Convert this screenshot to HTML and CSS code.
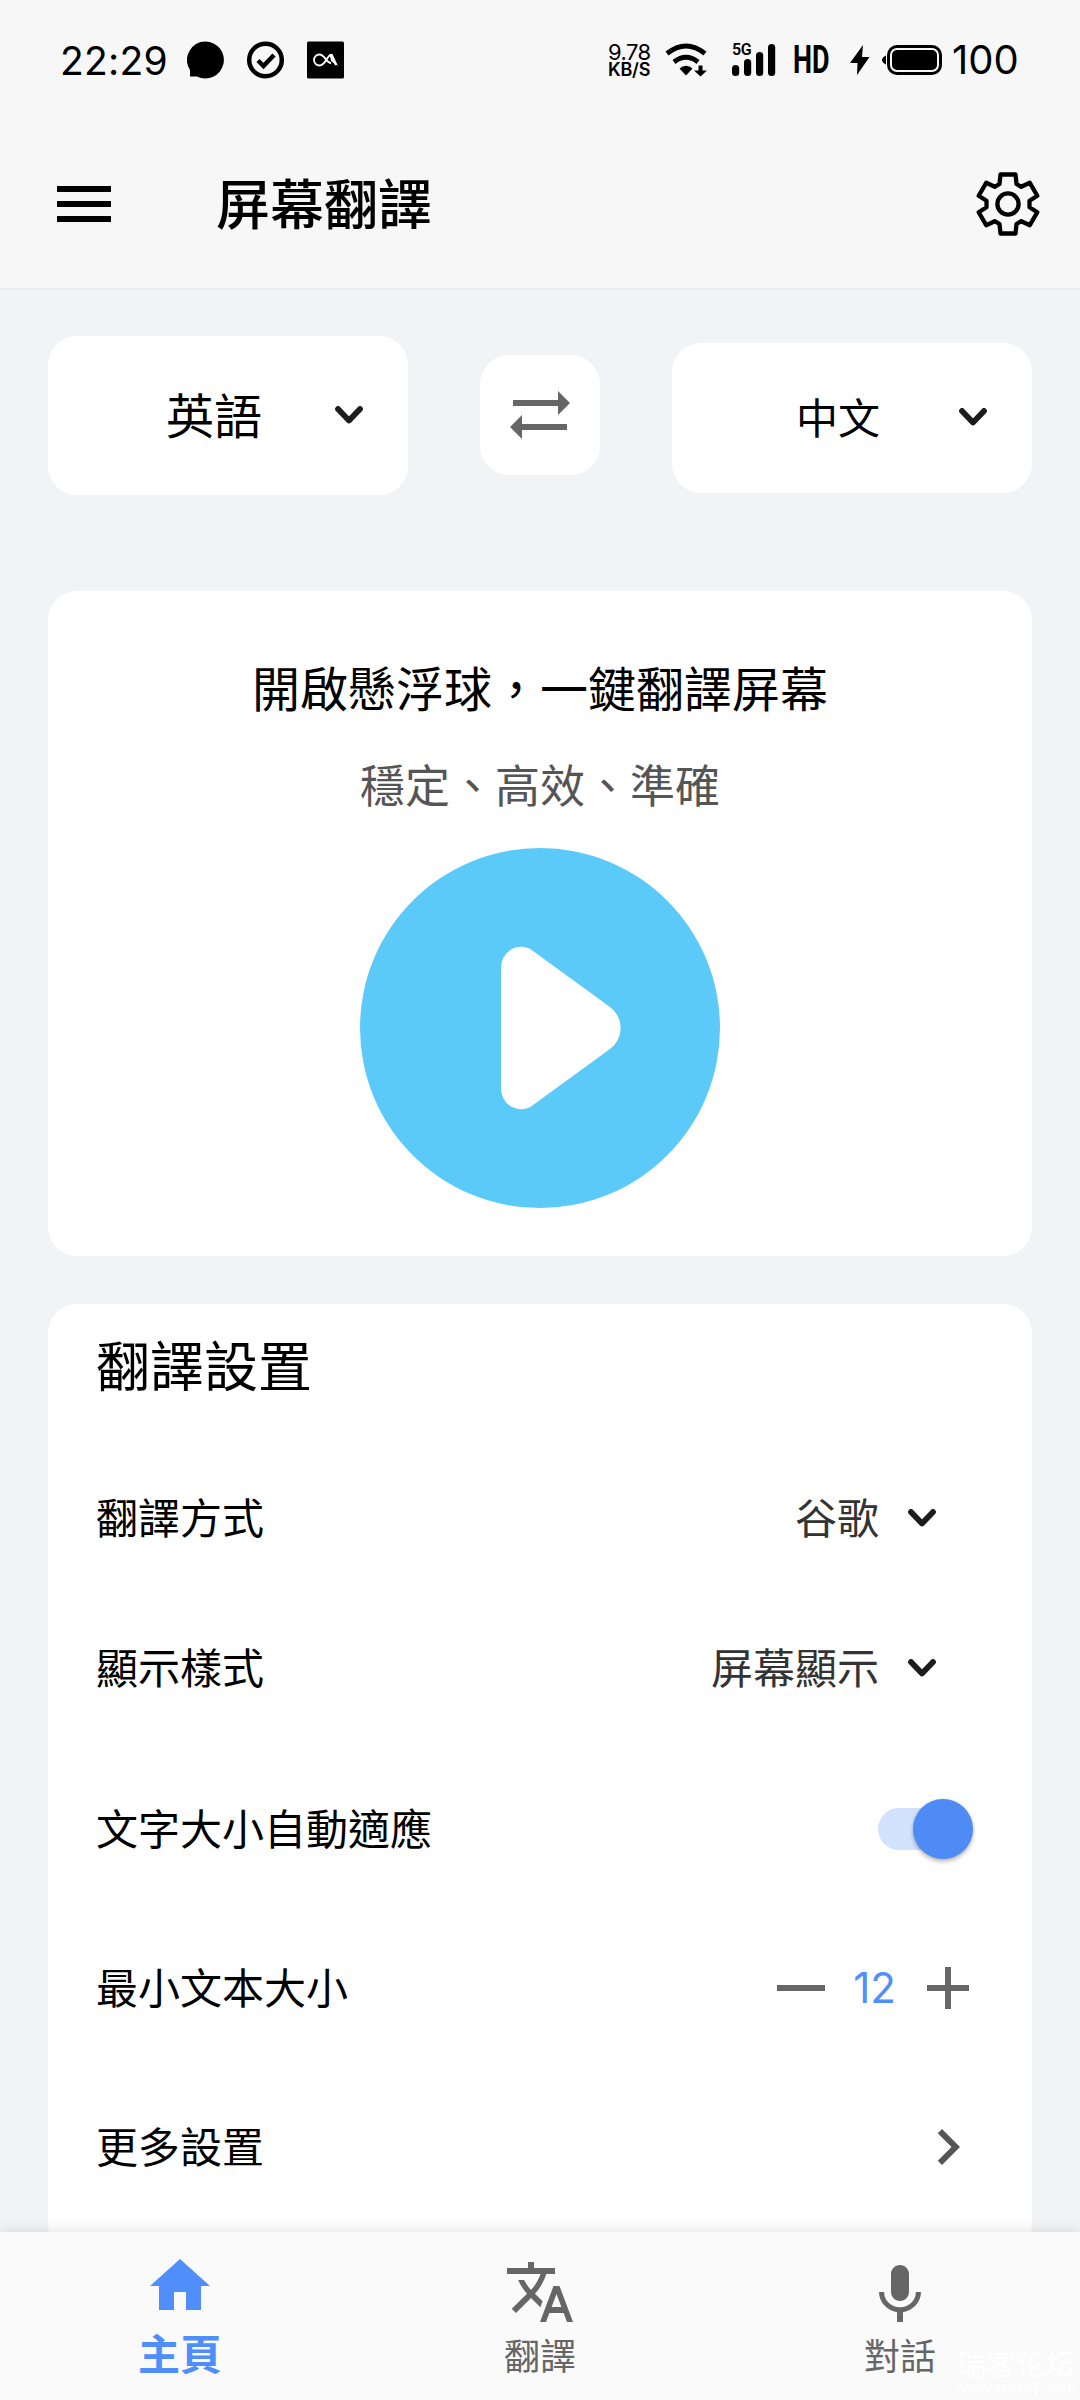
FILE: index.html
```html
<!DOCTYPE html>
<html lang="zh-TW">
<head>
<meta charset="utf-8">
<title>屏幕翻譯</title>
<link rel="stylesheet" href="styles.css">
</head>
<body>
<div class="app">
  <header class="top">
    <div class="status">
      <span class="clock">22:29</span>
      <svg class="notices" width="157" height="38" viewBox="0 0 157 38">
        <path d="M18.500 .5a18.500 18.500 0 1 1-8.500 35H3v-6.500A18.500 18.500 0 0 1 18.500 .5z"/>
        <circle cx="78.500" cy="19" r="16.300" fill="none" stroke="#000" stroke-width="4.500"/>
        <path d="M71 19.500l5.500 5.500L87 14" fill="none" stroke="#000" stroke-width="4.500"/>
        <rect x="120" y=".5" width="37" height="37" rx="1.500"/>
        <path d="M149 24L143 14C140 16 138 24.500 132.500 24.500a5.500 5.500 0 0 1 0-11C138 13.500 139 22 144 22" fill="none" stroke="#fff" stroke-width="1.800"/>
        <path d="M143 13l2.500 0 5.500 12-7-5z" fill="#fff"/>
      </svg>
      <div class="speed"><span class="rate">9.78</span><span class="unit">KB/S</span></div>
      <svg class="wifi" width="43" height="34" viewBox="0 0 43 34">
        <path d="M2 10.500Q21 -4.500 40 10.500M9 19Q21 9.500 33 19" fill="none" stroke="#000" stroke-width="4.800"/>
        <path d="M14.500 25.500Q21 20 27.500 25.500L21 32.500zM33.500 22.500h4v5h4.500l-6.500 6-6.500-6h4.500z"/>
      </svg>
      <div class="cell">
        <span class="gen">5G</span>
        <svg width="44" height="32" viewBox="0 0 44 32">
          <rect x="0" y="21" width="7.200" height="11" rx="3.500"/><rect x="12" y="15" width="7.200" height="17" rx="3.500"/>
          <rect x="24" y="8" width="7.200" height="24" rx="3.500"/><rect x="36" y="0" width="7.200" height="32" rx="3.500"/>
        </svg>
      </div>
      <span class="hd">HD</span>
      <svg class="bolt" width="20" height="30" viewBox="0 0 20 30"><path d="M13 0L0 18h7.500L7 30 19.500 12H12z"/></svg>
      <svg class="battery" width="61" height="30" viewBox="0 0 61 30">
        <path d="M4 10.500v9Q0 17.500 0 15t4-4.500z"/>
        <rect x="6.500" y="1.500" width="52" height="27" rx="8.500" fill="none" stroke="#000" stroke-width="3"/>
        <rect x="10" y="5" width="45" height="20" rx="5"/>
      </svg>
      <span class="level">100</span>
    </div>
    <div class="bar">
      <div class="menu"><i></i><i></i><i></i></div>
      <h1>屏幕翻譯</h1>
      <svg class="gear" width="66" height="66" viewBox="-33 -33 66 66">
        <path d="M-7.500-29.500L7.500-29.500 8.500-20 13.300-17.200 21.800-21.200 29.300-8.250 21.500-3.200 21.500 3.200 29.300 8.250 21.800 21.200 13.300 17.200 8.500 20 7.500 29.500-7.500 29.500-8.500 20-13.300 17.200-21.800 21.200-29.300 8.250-21.500 3.200-21.500-3.200-29.300-8.250-21.800-21.200-13.300-17.200-8.500-20z"/>
        <circle r="10.600"/>
      </svg>
    </div>
  </header>

  <main>
    <section class="langs">
      <div class="lang from"><span>英語</span><svg class="chev" width="28" height="18" viewBox="0 0 28 18"><path d="M3 3l11 11.500L25 3"/></svg></div>
      <div class="swap">
        <svg width="60" height="48" viewBox="0 0 60 48"><path d="M3 9h45V0l12 12-12 12v-9H3zM57 33H12v-9L0 36l12 12v-9h45z"/></svg>
      </div>
      <div class="lang to"><span>中文</span><svg class="chev" width="28" height="18" viewBox="0 0 28 18"><path d="M3 3l11 11.500L25 3"/></svg></div>
    </section>

    <section class="card hero">
      <h2>開啟懸浮球，一鍵翻譯屏幕</h2>
      <p>穩定、高效、準確</p>
      <svg width="360" height="360" viewBox="0 0 360 360">
        <circle cx="180" cy="180" r="180" fill="#5bcaf8"/>
        <path d="M141 121A20 21 0 0 1 173 103L250 159A26 26 0 0 1 250 201L173 257A20 21 0 0 1 141 239z" fill="#fff"/>
      </svg>
    </section>

    <section class="card settings">
      <h3>翻譯設置</h3>
      <div class="row pick"><span>翻譯方式</span><span class="value">谷歌</span><svg class="chev" width="28" height="18" viewBox="0 0 28 18"><path d="M3 3l11 11.500L25 3"/></svg></div>
      <div class="row pick"><span>顯示樣式</span><span class="value">屏幕顯示</span><svg class="chev" width="28" height="18" viewBox="0 0 28 18"><path d="M3 3l11 11.500L25 3"/></svg></div>
      <div class="row auto"><span>文字大小自動適應</span><div class="toggle"><div class="thumb"></div></div></div>
      <div class="row"><span>最小文本大小</span>
        <div class="stepper"><svg width="48" height="42" viewBox="0 0 48 42"><path d="M0 18h48v6H0z"/></svg><b>12</b><svg width="42" height="42" viewBox="0 0 42 42"><path d="M18 0h6v18h18v6H24v18h-6V24H0v-6h18z"/></svg></div>
      </div>
      <div class="row"><span>更多設置</span><svg class="more" width="72" height="72" viewBox="0 0 24 24"><path d="M10 6L8.590 7.410 13.170 12l-4.580 4.590L10 18l6-6z"/></svg></div>
    </section>
  </main>

  <nav>
    <div class="tab active"><svg width="72" height="72" viewBox="0 0 24 24"><path d="M10 20v-6h4v6h5v-8h3L12 3 2 12h3v8z"/></svg><span>主頁</span></div>
    <div class="tab"><svg width="72" height="72" viewBox="0 0 24 24"><path d="M12.870 15.070l-2.540-2.510.03-.03c1.740-1.940 2.980-4.170 3.710-6.530H17V4h-7V2H8v2H1v1.990h11.170C11.500 7.920 10.440 9.750 9 11.350 8.070 10.320 7.300 9.190 6.690 8h-2c.73 1.630 1.730 3.170 2.980 4.560l-5.090 5.020L4 19l5-5 3.110 3.110.76-2.040zM18.500 10h-2L12 22h2l1.120-3h4.750L21 22h2l-4.500-12zm-2.620 7l1.620-4.330L19.120 17h-3.240z"/></svg><span>翻譯</span></div>
    <div class="tab talk"><svg width="72" height="72" viewBox="0 0 24 24"><path d="M12 14c1.660 0 2.990-1.340 2.990-3L15 5c0-1.660-1.340-3-3-3S9 3.340 9 5v6c0 1.660 1.340 3 3 3zm5.300-3c0 3-2.540 5.100-5.300 5.100S6.700 14 6.700 11H5c0 3.410 2.720 6.230 6 6.720V21h2v-3.280c3.280-.48 6-3.300 6-6.720h-1.700z"/></svg><span>對話</span></div>
    <div class="watermark"><span>瑞客论坛</span><em>www.ruike1.com</em></div>
  </nav>
</div>
</body>
</html>
```
FILE: styles.css
```css
* { box-sizing: border-box; margin: 0; padding: 0; }
body { font-family: "Noto Sans CJK TC", sans-serif; color: #000; background: #f1f3f5; }
svg { display: block; flex: none; }
.app { width: 1080px; height: 2400px; display: flex; flex-direction: column; overflow: hidden; }

.top { height: 288px; flex: none; background: #f7f7f7; box-shadow: 0 1px 2px rgba(0,0,0,.06); }
.status { height: 120px; display: flex; align-items: center; padding-left: 60px; font-family: Inter, sans-serif; }
.clock { width: 127px; font-size: 39px; line-height: 48px; padding-top: 2px; letter-spacing: .2px; white-space: nowrap; }
.notices { margin-right: 264px; }
.speed { width: 57px; display: flex; flex-direction: column; gap: 1px; white-space: nowrap; }
.rate { font-size: 22px; line-height: 17px; letter-spacing: -.6px; }
.unit { font-size: 18px; line-height: 15px; font-weight: 600; letter-spacing: -.2px; }
.wifi { margin-right: 24px; }
.cell { display: grid; width: 61px; }
.cell > * { grid-area: 1 / 1; }
.gen { font: 600 16px/12px Roboto, sans-serif; letter-spacing: -.5px; }
.hd { width: 57px; font: 700 39px/40px Roboto, sans-serif; transform: scaleX(.69); transform-origin: 0 50%; white-space: nowrap; }
.bolt { margin-right: 12px; }
.battery { margin-right: 9px; }
.level { font-size: 40px; line-height: 48px; }

.bar { height: 168px; display: flex; align-items: center; padding: 0 39px 0 57px; }
.menu { width: 159px; display: grid; gap: 9px; }
.menu i { width: 54px; height: 6px; background: #000; }
h1 { flex: 1; font-size: 54px; line-height: 80px; font-weight: 500; margin-top: -4px; }
.gear { fill: none; stroke: #000; stroke-width: 4.300; stroke-linejoin: round; }

main { flex: 1; min-height: 0; padding: 48px 48px 0; overflow: hidden; }
.langs { height: 159px; display: flex; justify-content: space-between; align-items: center; }
.lang { width: 360px; display: flex; align-items: center; background: #fff; border-radius: 29px; }
.lang span { flex: 1; margin-top: -6px; }
.from { height: 159px; padding: 0 45px 0 118px; font-size: 48px; }
.to { height: 150px; margin-top: 5px; padding: 0 45px 0 124px; font-size: 42px; }
.chev { fill: none; stroke: #1c1c1c; stroke-width: 5.800; stroke-linecap: round; stroke-linejoin: round; }
.from .chev, .to .chev { margin-top: -2px; }
.swap { width: 120px; height: 120px; margin-top: -1px; border-radius: 29px; background: #fff; display: grid; place-items: center; fill: #666; }

.card { background: #fff; border-radius: 29px; }
.hero { height: 665px; margin-top: 96px; padding-top: 59px; display: flex; flex-direction: column; align-items: center; }
h2 { font-size: 48px; line-height: 72px; font-weight: 400; }
.hero p { font-size: 45px; line-height: 66px; margin: 29px 0 31px; color: #555; }
.settings { margin-top: 48px; height: 949px; padding: 20px 48px 0; }
h3 { font-size: 54px; line-height: 80px; font-weight: 400; height: 119px; }
.row { height: 159px; display: flex; align-items: center; font-size: 42px; line-height: 62px; }
.row > span:first-child { flex: 1; margin-top: -4px; }
.pick { height: 150px; padding-right: 48px; }
.pick .value { margin: -4px 29px 0 0; color: #333; }
.auto { margin-top: 6px; }
.toggle { width: 84px; height: 42px; margin-right: 22px; border-radius: 21px; background: #d2e2fd; display: flex; justify-content: flex-end; align-items: center; }
.thumb { flex: none; width: 60px; height: 60px; margin-right: -11px; border-radius: 50%; background: #4f8bf5; box-shadow: 0 3px 4px rgba(0,0,0,.24), 0 0 3px rgba(0,0,0,.12); }
.stepper { display: flex; align-items: center; fill: #666; padding-right: 15px; }
.stepper b { width: 102px; padding-right: 3px; text-align: center; font: 400 42px/50px Inter, sans-serif; color: #4f8ffb; }
.more { fill: #555; }

nav { position: relative; height: 168px; flex: none; display: flex; background: #fafafa; box-shadow: 0 0 14px rgba(0,0,0,.13); }
.tab { flex: 1; display: flex; flex-direction: column; align-items: center; padding-top: 24px; fill: #666; color: #666; font-size: 36px; line-height: 52px; }
.tab span { margin-top: 0; }
.talk { padding-top: 27px; }
.talk span { margin-top: -3px; }
.active { padding-top: 18px; fill: #508efb; color: #508efb; font-size: 42px; font-weight: 700; }
.active span { margin-top: 4px; }
.watermark { position: absolute; left: 956px; top: 113px; display: flex; flex-direction: column; color: #fff; font-family: "Noto Sans CJK SC", sans-serif; font-size: 30px; line-height: 34px; white-space: nowrap; }
.watermark em { font: italic 18px/18px "Liberation Serif", serif; }
```
